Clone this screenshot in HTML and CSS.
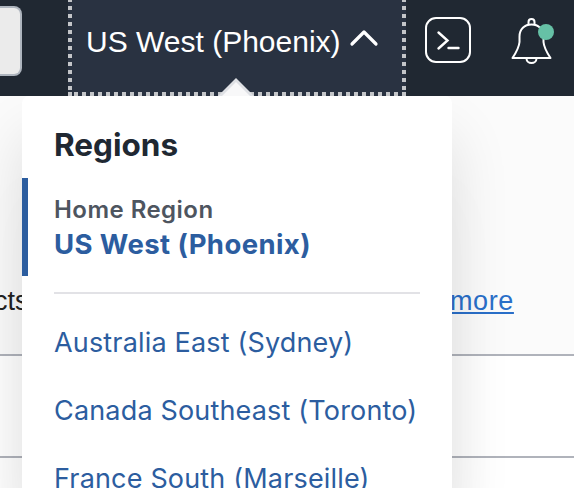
FILE: index.html
```html
<!DOCTYPE html>
<html lang="en">
<head>
<meta charset="utf-8">
<title>Regions</title>
<link rel="stylesheet" href="styles.css">
</head>
<body>
<header class="topbar">
  <div class="search"></div>
  <div class="region-wrap">
    <button class="region-button" type="button">
      <span class="region-name">US West (Phoenix)</span>
      <svg class="chevron" width="30" height="20" viewBox="0 0 30 20"><path d="M3 16 15 4l12 12"/></svg>
    </button>
    <svg class="pointer" width="38" height="19" viewBox="0 0 38 19"><path class="pointer-edge" d="M0 19 19 0l19 19z"/><path class="pointer-fill" d="M4 19 19 4l15 15z"/></svg>
    <nav class="menu">
      <h2 class="menu-title">Regions</h2>
      <div class="home">
        <div class="home-label">Home Region</div>
        <div class="home-name">US West (Phoenix)</div>
      </div>
      <div class="divider"></div>
      <a class="item">Australia East (Sydney)</a>
      <a class="item">Canada Southeast (Toronto)</a>
      <a class="item">France South (Marseille)</a>
    </nav>
  </div>
  <svg class="shell" width="46" height="46" viewBox="0 0 46 46"><rect x="1" y="1" width="44" height="44" rx="10"/><path class="prompt" d="m13.500 15.500 9 8-9 8M23.500 31h10"/></svg>
  <div class="alerts">
    <svg class="bell" width="42" height="48" viewBox="0 0 42 48"><path d="M1.500 41C5.500 35 8 31 8.500 25V19.500C8.500 12 13.500 7.500 20.500 7.500S32.500 12 32.500 19.500V25C33 31 35.500 35 39.500 41Z"/><path d="M17.500 7.500V5a3 3 0 0 1 6 0V7.500M15.500 41.500a5 4.500 0 0 0 10 0"/></svg>
    <span class="dot"></span>
  </div>
</header>
<main class="page">
  <div class="intro"><span class="lead">cts</span><a class="more">more</a></div>
  <div class="row"></div>
  <div class="row"></div>
</main>
</body>
</html>
```
FILE: styles.css
```css
* { box-sizing: border-box; }
html { overflow: hidden; }
body {
  margin: 0;
  height: 488px;
  overflow: hidden;
  background: #fff;
  font-family: "Liberation Sans", Arial, sans-serif;
}
svg { display: block; fill: none; stroke: #fff; }
.topbar {
  position: relative;
  display: flex;
  height: 96px;
  background: #202832;
}
.search {
  width: 22px;
  height: 70px;
  margin: 6px 46px 0 0;
  border: 2px solid #aeb5be;
  border-left: 0;
  border-radius: 0 8px 8px 0;
  background: #ebebeb;
}
.region-wrap { position: relative; width: 338px; }
.region-button {
  display: flex;
  width: 338px;
  height: 96px;
  padding: 0 0 0 18px;
  border: 0;
  color: #fff;
  font: 30px/84px "Liberation Sans", Arial, sans-serif;
  background:
    linear-gradient(#c3c5c8, #c3c5c8) 0 92px / 4px 4px no-repeat,
    repeating-linear-gradient(90deg, #c3c5c8 0 4px, #293241 4px 8px) 6px 92px / 332px 4px no-repeat,
    repeating-linear-gradient(#c3c5c8 0 4px, #293241 4px 8px) 0 -2px / 4px 96px no-repeat,
    repeating-linear-gradient(#c3c5c8 0 4px, #293241 4px 8px) 334px -2px / 4px 96px no-repeat,
    #293241;
}
.region-name { width: 258px; white-space: nowrap; text-align: left; }
.chevron { margin: 28px 0 0 5px; stroke-width: 3.2; stroke-linecap: round; stroke-linejoin: round; }
.pointer { position: absolute; left: 149px; top: 78px; stroke: none; z-index: 2; clip-path: inset(0 0 1px); }
.pointer-edge { fill: #dfe1e5; }
.pointer-fill { fill: #f8f8f9; }
.menu {
  position: absolute;
  left: -46px;
  top: 96px;
  width: 430px;
  height: 392px;
  padding: 30px 32px 0;
  border-radius: 7px 7px 0 0;
  background: #fff;
  box-shadow: 0 40px 60px rgba(0, 0, 0, .12), 0 100px 60px rgba(0, 0, 0, .03);
  clip-path: inset(0 -100px 0 -100px);
  font-family: Inter, sans-serif;
  color: #2c5d9f;
  white-space: nowrap;
}
.menu-title { margin: 0; height: 52px; font-size: 31.5px; line-height: 37px; font-weight: 700; color: #202832; }
.home {
  height: 98px;
  margin: 0 0 0 -32px;
  padding: 17px 0 0 26px;
  border-left: 6px solid #2c5d9f;
}
.home-label { font-size: 24px; line-height: 30px; letter-spacing: .46px; color: #4e555f; font-weight: 600; }
.home-name { font-size: 27.5px; line-height: 39px; letter-spacing: .4px; font-weight: 700; }
.divider { height: 2px; margin: 16px 0; background: #e2e2e6; }
.item { display: block; height: 68px; font-size: 27px; line-height: 66px; letter-spacing: .17px; }
.item:last-child { height: 46px; }
.shell { margin: 17px 0 0 19px; stroke-width: 2; }
.prompt { stroke-width: 2.4; stroke-linecap: round; }
.alerts { position: relative; margin: 17px 0 0 40px; }
.bell { stroke-width: 2; stroke-linejoin: round; }
.dot { position: absolute; left: 27px; top: 7px; width: 16px; height: 16px; border-radius: 50%; background: #66c1a6; }
.intro {
  display: flex;
  height: 260px;
  padding-top: 190px;
  border-bottom: 2px solid #b0b3bb;
  background: #fbfbfb;
  font-size: 27px;
  line-height: 30px;
  color: #222;
}
.lead { width: 456px; margin-left: -6px; }
.more { height: 29px; letter-spacing: .6px; color: #2a6fc9; text-decoration: underline; text-decoration-thickness: 2px; text-underline-offset: 2px; text-decoration-skip-ink: none; }
.row { height: 102px; border-bottom: 2px solid #b0b3bb; background: #fff; }
.row:last-child { height: 30px; border: 0; }
```
